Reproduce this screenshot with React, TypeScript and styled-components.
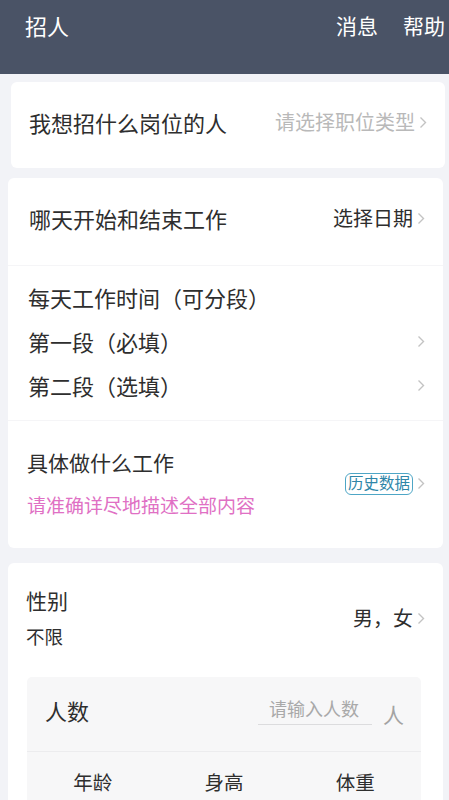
import React from "react";
import styled, { createGlobalStyle } from "styled-components";

const Global = createGlobalStyle`
  html, body { margin: 0; padding: 0; background: #f2f3f7; }
  body { font-family: "Noto Sans CJK SC", "Noto Sans", sans-serif; color: #2e2e2e; }
  * { box-sizing: border-box; }
`;

const Page = styled.div`
  width: 449px;
  height: 800px;
  overflow: hidden;
  background: #f2f3f7;
`;

const Header = styled.header`
  height: 74px;
  background: #4a5366;
  padding: 0 4px 24px 25px;
  display: flex;
  align-items: center;
  justify-content: space-between;
  color: #ffffff;
`;

const Title = styled.h1`
  margin: 0;
  font-size: 22px;
  font-weight: 400;
  line-height: 1;
`;

const Actions = styled.div`
  display: flex;
  gap: 25px;
  font-size: 21px;
  line-height: 1;
`;

const Main = styled.main`
  padding: 8px 6px 0 8px;
  display: flex;
  flex-direction: column;
`;

const Card = styled.section<{ $gap?: number; $shift?: boolean }>`
  background: #ffffff;
  border-radius: 6px;
  margin-top: ${(p) => p.$gap ?? 0}px;
  margin-left: ${(p) => (p.$shift ? 3 : 0)}px;
  margin-right: ${(p) => (p.$shift ? -2 : 0)}px;
  overflow: hidden;
`;

const Row = styled.div<{ $h: number; $pl?: number; $pb?: number }>`
  height: ${(p) => p.$h}px;
  display: flex;
  align-items: center;
  justify-content: space-between;
  padding: 0 18px ${(p) => p.$pb ?? 0}px ${(p) => p.$pl ?? 20}px;
`;

const Label = styled.span<{ $size?: number }>`
  font-size: ${(p) => p.$size ?? 22}px;
  line-height: 1;
  color: #2e2e2e;
`;

const Value = styled.span<{ $muted?: boolean; $size?: number }>`
  display: flex;
  align-items: center;
  gap: 4px;
  font-size: ${(p) => p.$size ?? 20}px;
  line-height: 1;
  color: ${(p) => (p.$muted ? "#b9b9b9" : "#2e2e2e")};
`;

const Section = styled.div<{ $h: number; $pl?: number; $pb?: number }>`
  height: ${(p) => p.$h}px;
  padding: 0 18px ${(p) => p.$pb ?? 0}px ${(p) => p.$pl ?? 20}px;
  border-top: 1px solid #f5f5f7;
  display: flex;
  flex-direction: column;
  justify-content: center;
`;

const Line = styled.div<{ $h: number }>`
  height: ${(p) => p.$h}px;
  display: flex;
  align-items: center;
  justify-content: space-between;
`;

const SplitRow = styled.div`
  display: flex;
  align-items: center;
  justify-content: space-between;
`;

const Stack = styled.div`
  display: flex;
  flex-direction: column;
`;

const Hint = styled.span`
  font-size: 19px;
  line-height: 1;
  color: #e070c4;
`;

const Badge = styled.span`
  display: inline-flex;
  align-items: center;
  justify-content: center;
  width: 68px;
  height: 22px;
  border: 1.5px solid #4ea6c6;
  border-radius: 6px;
  font-size: 15.5px;
  line-height: 1;
  color: #2f86a8;
  padding-bottom: 1px;
`;

const Inner = styled.div`
  margin: 0 22px 0 19px;
  background: #f7f7f8;
  border-radius: 5px;
`;

const InnerRow = styled.div`
  height: 75px;
  display: flex;
  align-items: center;
  padding: 0 17px 8px 18px;
  border-bottom: 1px solid #ececee;
`;

const InputWrap = styled.div`
  margin-left: auto;
  display: flex;
  align-items: center;
  gap: 11px;
`;

const Input = styled.input`
  width: 114px;
  height: 30px;
  border: none;
  border-bottom: 1px solid #dcdcde;
  background: transparent;
  font-family: inherit;
  font-size: 18px;
  padding: 0 0 3px 11px;
  color: #333;
  outline: none;
  &::placeholder { color: #a9a9a9; }
`;

const Unit = styled.span`
  font-size: 21px;
  line-height: 1;
  color: #a3a3a3;
  margin-top: 8px;
`;

const Cols = styled.div`
  height: 60px;
  display: grid;
  grid-template-columns: repeat(3, 1fr);
  align-items: center;
`;

const Col = styled.span`
  text-align: center;
  font-size: 19.5px;
  line-height: 1;
  color: #2e2e2e;
`;

const Chevron = () => (
  <svg width="8" height="13" viewBox="0 0 8 13" style={{ flex: "none" }}>
    <polyline points="1.5,1.5 6.5,6.5 1.5,11.5" fill="none" stroke="#c3c3c3" strokeWidth="1.4" />
  </svg>
);

export default function App() {
  return (
    <Page>
      <Global />
      <Header>
        <Title>招人</Title>
        <Actions>
          <span>消息</span>
          <span>帮助</span>
        </Actions>
      </Header>
      <Main>
        <Card $shift>
          <Row $h={86} $pl={18} $pb={6}>
            <Label>我想招什么岗位的人</Label>
            <Value $muted>
              请选择职位类型
              <Chevron />
            </Value>
          </Row>
        </Card>
        <Card $gap={10}>
          <Row $h={87} $pl={21} $pb={7}>
            <Label>哪天开始和结束工作</Label>
            <Value>
              选择日期
              <Chevron />
            </Value>
          </Row>
          <Section $h={155} $pb={4}>
            <Line $h={44}>
              <Label>每天工作时间（可分段）</Label>
            </Line>
            <Line $h={44}>
              <Label>第一段（必填）</Label>
              <Chevron />
            </Line>
            <Line $h={44}>
              <Label>第二段（选填）</Label>
              <Chevron />
            </Line>
          </Section>
          <Section $h={128} $pl={19} $pb={2}>
            <SplitRow>
              <Stack>
                <Line $h={42}>
                  <Label $size={21}>具体做什么工作</Label>
                </Line>
                <Line $h={42}>
                  <Hint>请准确详尽地描述全部内容</Hint>
                </Line>
              </Stack>
              <Value>
                <Badge>历史数据</Badge>
                <Chevron />
              </Value>
            </SplitRow>
          </Section>
        </Card>
        <Card $gap={15}>
          <Row $h={114} $pl={18} $pb={4}>
            <Stack>
              <Line $h={36}>
                <Label $size={21}>性别</Label>
              </Line>
              <Line $h={36}>
                <Label $size={18.5}>不限</Label>
              </Line>
            </Stack>
            <Value>
              男，女
              <Chevron />
            </Value>
          </Row>
          <Inner>
            <InnerRow>
              <Label>人数</Label>
              <InputWrap>
                <Input placeholder="请输入人数" />
                <Unit>人</Unit>
              </InputWrap>
            </InnerRow>
            <Cols>
              <Col>年龄</Col>
              <Col>身高</Col>
              <Col>体重</Col>
            </Cols>
          </Inner>
        </Card>
      </Main>
    </Page>
  );
}
